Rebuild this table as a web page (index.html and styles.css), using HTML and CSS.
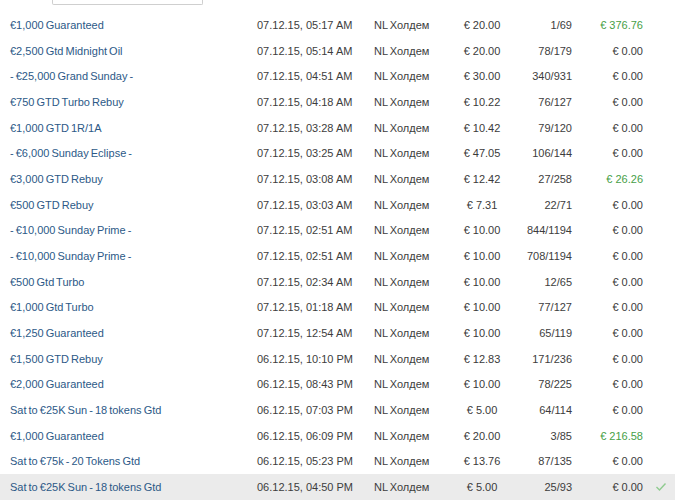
FILE: index.html
```html
<!DOCTYPE html>
<html>
<head>
<meta charset="utf-8">
<link rel="stylesheet" href="styles.css">
</head>
<body>
<div class="page">
  <div class="search"></div>
  <div class="list">
    <div class="row"><span class="name">€1,000 Guaranteed</span><span class="date">07.12.15, 05:17 AM</span><span class="type">NL Холдем</span><span class="buy">€ 20.00</span><span class="place">1/69</span><span class="win pos">€ 376.76</span><span class="chk"></span></div>
    <div class="row"><span class="name">€2,500 Gtd Midnight Oil</span><span class="date">07.12.15, 05:14 AM</span><span class="type">NL Холдем</span><span class="buy">€ 20.00</span><span class="place">78/179</span><span class="win">€ 0.00</span><span class="chk"></span></div>
    <div class="row"><span class="name">- €25,000 Grand Sunday -</span><span class="date">07.12.15, 04:51 AM</span><span class="type">NL Холдем</span><span class="buy">€ 30.00</span><span class="place">340/931</span><span class="win">€ 0.00</span><span class="chk"></span></div>
    <div class="row"><span class="name">€750 GTD Turbo Rebuy</span><span class="date">07.12.15, 04:18 AM</span><span class="type">NL Холдем</span><span class="buy">€ 10.22</span><span class="place">76/127</span><span class="win">€ 0.00</span><span class="chk"></span></div>
    <div class="row"><span class="name">€1,000 GTD 1R/1A</span><span class="date">07.12.15, 03:28 AM</span><span class="type">NL Холдем</span><span class="buy">€ 10.42</span><span class="place">79/120</span><span class="win">€ 0.00</span><span class="chk"></span></div>
    <div class="row"><span class="name">- €6,000 Sunday Eclipse -</span><span class="date">07.12.15, 03:25 AM</span><span class="type">NL Холдем</span><span class="buy">€ 47.05</span><span class="place">106/144</span><span class="win">€ 0.00</span><span class="chk"></span></div>
    <div class="row"><span class="name">€3,000 GTD Rebuy</span><span class="date">07.12.15, 03:08 AM</span><span class="type">NL Холдем</span><span class="buy">€ 12.42</span><span class="place">27/258</span><span class="win pos">€ 26.26</span><span class="chk"></span></div>
    <div class="row"><span class="name">€500 GTD Rebuy</span><span class="date">07.12.15, 03:03 AM</span><span class="type">NL Холдем</span><span class="buy">€ 7.31</span><span class="place">22/71</span><span class="win">€ 0.00</span><span class="chk"></span></div>
    <div class="row"><span class="name">- €10,000 Sunday Prime -</span><span class="date">07.12.15, 02:51 AM</span><span class="type">NL Холдем</span><span class="buy">€ 10.00</span><span class="place">844/1194</span><span class="win">€ 0.00</span><span class="chk"></span></div>
    <div class="row"><span class="name">- €10,000 Sunday Prime -</span><span class="date">07.12.15, 02:51 AM</span><span class="type">NL Холдем</span><span class="buy">€ 10.00</span><span class="place">708/1194</span><span class="win">€ 0.00</span><span class="chk"></span></div>
    <div class="row"><span class="name">€500 Gtd Turbo</span><span class="date">07.12.15, 02:34 AM</span><span class="type">NL Холдем</span><span class="buy">€ 10.00</span><span class="place">12/65</span><span class="win">€ 0.00</span><span class="chk"></span></div>
    <div class="row"><span class="name">€1,000 Gtd Turbo</span><span class="date">07.12.15, 01:18 AM</span><span class="type">NL Холдем</span><span class="buy">€ 10.00</span><span class="place">77/127</span><span class="win">€ 0.00</span><span class="chk"></span></div>
    <div class="row"><span class="name">€1,250 Guaranteed</span><span class="date">07.12.15, 12:54 AM</span><span class="type">NL Холдем</span><span class="buy">€ 10.00</span><span class="place">65/119</span><span class="win">€ 0.00</span><span class="chk"></span></div>
    <div class="row"><span class="name">€1,500 GTD Rebuy</span><span class="date">06.12.15, 10:10 PM</span><span class="type">NL Холдем</span><span class="buy">€ 12.83</span><span class="place">171/236</span><span class="win">€ 0.00</span><span class="chk"></span></div>
    <div class="row"><span class="name">€2,000 Guaranteed</span><span class="date">06.12.15, 08:43 PM</span><span class="type">NL Холдем</span><span class="buy">€ 10.00</span><span class="place">78/225</span><span class="win">€ 0.00</span><span class="chk"></span></div>
    <div class="row"><span class="name">Sat to €25K Sun - 18 tokens Gtd</span><span class="date">06.12.15, 07:03 PM</span><span class="type">NL Холдем</span><span class="buy">€ 5.00</span><span class="place">64/114</span><span class="win">€ 0.00</span><span class="chk"></span></div>
    <div class="row"><span class="name">€1,000 Guaranteed</span><span class="date">06.12.15, 06:09 PM</span><span class="type">NL Холдем</span><span class="buy">€ 20.00</span><span class="place">3/85</span><span class="win pos">€ 216.58</span><span class="chk"></span></div>
    <div class="row"><span class="name">Sat to €75k - 20 Tokens Gtd</span><span class="date">06.12.15, 05:23 PM</span><span class="type">NL Холдем</span><span class="buy">€ 13.76</span><span class="place">87/135</span><span class="win">€ 0.00</span><span class="chk"></span></div>
    <div class="row active"><span class="name">Sat to €25K Sun - 18 tokens Gtd</span><span class="date">06.12.15, 04:50 PM</span><span class="type">NL Холдем</span><span class="buy">€ 5.00</span><span class="place">25/93</span><span class="win">€ 0.00</span><span class="chk"><svg width="12" height="10" viewBox="0 0 12 10"><polyline points="1.5,5 4.5,8 10.5,1.5" fill="none" stroke="#8fcb8f" stroke-width="1.4"/></svg></span></div>
  </div>
</div>
</body>
</html>
```

FILE: styles.css
```css
html, body {
  margin: 0;
  padding: 0;
  background: #ffffff;
}
body {
  font-family: "Liberation Sans", Arial, sans-serif;
  font-size: 11px;
  color: #3a3a3a;
  overflow: hidden;
}
.page {
  width: 675px;
  height: 504px;
  overflow: hidden;
}
.search {
  margin-left: 52px;
  width: 149px;
  height: 4px;
  border: 1px solid #cfcfcf;
  border-top: none;
  border-radius: 0 0 2px 2px;
}
.list {
  margin-top: 7.2px;
  display: flex;
  flex-direction: column;
}
.row {
  display: grid;
  grid-template-columns: 10px 247px 117px 78px 60px 60px 71px 32px;
  align-items: center;
  height: 25.67px;
  white-space: nowrap;
}
.row.active {
  background: #ebebeb;
}
.name {
  grid-column: 2;
  color: #2c5987;
  word-spacing: -1px;
}
.date {
  color: #3d3d3d;
}
.type {
  color: #3d3d3d;
  word-spacing: -1px;
}
.buy {
  text-align: center;
}
.place {
  text-align: right;
  color: #3d3d3d;
}
.win {
  text-align: right;
}
.win.pos {
  color: #47a047;
}
.chk {
  display: flex;
  justify-content: center;
  align-items: center;
  padding-left: 4px;
}
```
